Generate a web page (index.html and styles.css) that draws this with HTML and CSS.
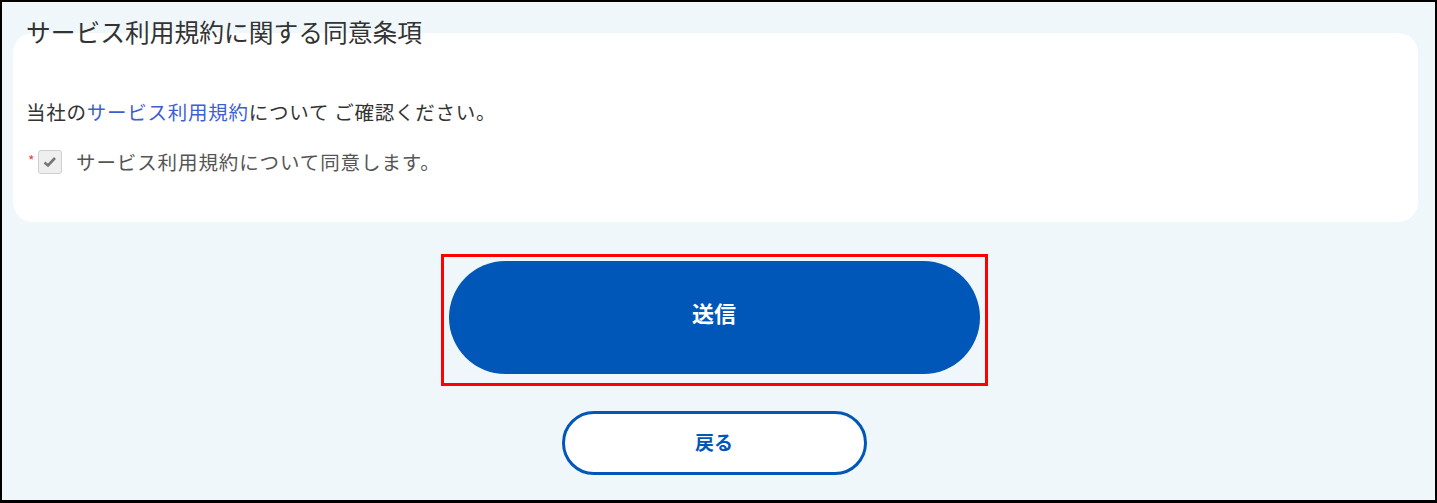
FILE: index.html
```html
<!DOCTYPE html>
<html lang="ja">
<head>
<meta charset="utf-8">
<link rel="stylesheet" href="styles.css">
</head>
<body>
<div class="frame">
  <h2 class="title">サービス利用規約に関する同意条項</h2>
  <div class="card">
    <p class="lead">当社の<a class="link" href="#">サービス利用規約</a>について ご確認ください。</p>
    <label class="agree">
      <span class="req">*</span>
      <span class="box">
        <svg width="16" height="14" viewBox="0 0 16 14"><path d="M2.5 7.5 L6 10.5 L13 3" fill="none" stroke="#777777" stroke-width="2.6"/></svg>
      </span>
      <span class="agree-text">サービス利用規約について同意します。</span>
    </label>
  </div>
  <div class="actions">
    <div class="highlight">
      <button class="btn-primary" type="button">送信</button>
    </div>
    <button class="btn-back" type="button">戻る</button>
  </div>
</div>
</body>
</html>
```
FILE: styles.css
```css
* { box-sizing: border-box; }
html, body { margin: 0; padding: 0; }
body {
  font-family: "Noto Sans CJK JP", "Noto Sans", sans-serif;
  background: #000;
}
.frame {
  width: 1437px;
  height: 503px;
  border-style: solid;
  border-color: #000;
  border-width: 2px 2px 3px 2px;
  background: #eff7fa;
  padding: 0 17px 0 11px;
  overflow: hidden;
}
.title {
  margin: 14px 0 0 13px;
  font-size: 24.75px;
  line-height: 30px;
  font-weight: normal;
  color: #333;
  position: relative;
  z-index: 1;
}
.card {
  margin-top: -13px;
  background: #fff;
  border-radius: 20px;
  padding: 65px 13px 46px;
}
.lead {
  margin: 0;
  font-size: 19.5px;
  letter-spacing: 0.75px;
  line-height: 28px;
  color: #333;
}
.link {
  color: #3d5fd1;
  text-decoration: none;
}
.agree {
  margin-top: 22px;
  display: flex;
  align-items: center;
  height: 28px;
}
.req {
  color: #e0464a;
  font-size: 14px;
  line-height: 1;
  align-self: flex-start;
  margin: 5px 0 0 2px;
  width: 10px;
}
.box {
  width: 24px;
  height: 24px;
  border: 1px solid #cfcfcf;
  border-radius: 3px;
  background: #efefef;
  display: flex;
  align-items: center;
  justify-content: center;
}
.agree-text {
  margin-left: 14px;
  font-size: 19.5px;
  letter-spacing: 0.9px;
  line-height: 28px;
  color: #555;
}
.actions {
  display: flex;
  flex-direction: column;
  align-items: center;
  margin-top: 32px;
  padding-right: 3px;
}
.highlight {
  border: 3px solid #ff0000;
  padding: 4px 5px 9px;
}
.btn-primary {
  display: block;
  width: 531px;
  height: 113px;
  border: none;
  border-radius: 57px;
  background: #0057b8;
  color: #fff;
  font-family: inherit;
  font-size: 22px;
  font-weight: bold;
  padding: 0 0 12px;
}
.btn-back {
  margin-top: 25px;
  width: 305px;
  height: 64px;
  border: 3px solid #0057b8;
  border-radius: 32px;
  background: #fff;
  color: #0057b8;
  font-family: inherit;
  font-size: 19px;
  font-weight: bold;
  padding: 0 0 4px;
}
```
